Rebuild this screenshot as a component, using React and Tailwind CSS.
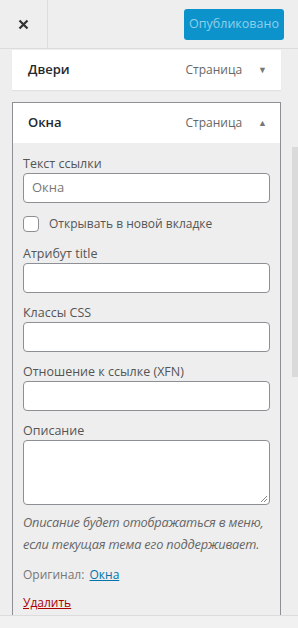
import React from 'react';

const Field = ({ label, value, tall }) => (
  <div className="flex flex-col">
    <label className="text-[12.5px] leading-[18px] text-[#555]">{label}</label>
    {tall ? (
      <div className="relative h-[65px] rounded-[4px] border border-[#8c8f94] bg-white">
        <svg className="absolute bottom-[1px] right-[1px]" width="8" height="8" viewBox="0 0 8 8">
          <path d="M7 1 1 7M7 4 4 7" stroke="#888" strokeWidth="1" />
        </svg>
      </div>
    ) : (
      <div className="flex h-[30px] items-center rounded-[4px] border border-[#8c8f94] bg-white px-[8px] text-[13px] text-[#777]">
        {value}
      </div>
    )}
  </div>
);

export default function App() {
  return (
    <div className="relative h-[628px] w-[298px] overflow-hidden bg-[#eeeeee] font-['Open_Sans',sans-serif]">
      {/* Header */}
      <div className="flex h-[49px] items-center border-b border-[#dcdcde]">
        <div className="flex h-full w-[48px] items-center justify-center border-r border-[#dcdcde]">
          <svg width="11" height="11" viewBox="0 0 11 11">
            <path d="M1.5 1.5 9.5 9.5M9.5 1.5 1.5 9.5" stroke="#333" strokeWidth="2.2" />
          </svg>
        </div>
        <div className="flex-1" />
        <div className="mr-[14px] flex h-[31px] w-[100px] items-center justify-center rounded-[3px] bg-[#0c93cb] text-[12.5px] text-[#8fd0ec]">
          Опубликовано
        </div>
      </div>

      {/* Menu items */}
      <div className="ml-[12px] mr-[17px] flex flex-col">
        <div className="mt-[1px] flex h-[40px] items-center bg-white pl-[16px] pr-[14px] shadow-[0_1px_1px_rgba(0,0,0,0.06)]">
          <span className="flex-1 text-[13px] font-semibold text-[#23282d]">Двери</span>
          <span className="text-[12px] text-[#666]">Страница</span>
          <span className="ml-[16px] text-[9px] text-[#777]">▼</span>
        </div>

        <div className="mt-[12px] border-x border-t border-[#8c8f94]">
          <div className="flex h-[40px] items-center bg-white pl-[15px] pr-[13px]">
            <span className="flex-1 text-[13px] font-semibold text-[#23282d]">Окна</span>
            <span className="text-[12px] text-[#666]">Страница</span>
            <span className="ml-[16px] text-[9px] text-[#777]">▲</span>
          </div>
          <div className="flex h-[472px] flex-col bg-[#eeeeee] px-[10px] pt-[12px]">
            <Field label="Текст ссылки" value="Окна" />
            <label className="mt-[12px] flex items-center gap-[10px]">
              <span className="h-[16px] w-[16px] rounded-[4px] border border-[#8c8f94] bg-white" />
              <span className="text-[12px] text-[#555]">Открывать в новой вкладке</span>
            </label>
            <div className="mt-[12px] flex flex-col gap-[11px]">
              <Field label="Атрибут title" />
              <Field label="Классы CSS" />
              <Field label="Отношение к ссылке (XFN)" />
              <Field label="Описание" tall />
            </div>
            <p className="mt-[6px] text-[12.8px] italic leading-[22px] tracking-[-0.2px] text-[#666]">
              Описание будет отображаться в меню, если текущая тема его поддерживает.
            </p>
            <div className="mt-[11px] text-[12px] leading-[18px] text-[#777]">
              Оригинал:{' '}
              <span className="ml-[2px] text-[#0073aa] underline">Окна</span>
            </div>
            <div className="mt-[10px] text-[12px] leading-[18px] text-[#a00] underline">Удалить</div>
          </div>
        </div>
      </div>

      <div className="h-[14px] border-t border-[#dcdcde] bg-[#f1f1f1]" />

      {/* Scrollbar */}
      <div className="absolute right-0 top-[147px] h-[230px] w-[6px] bg-[#dadada]" />
    </div>
  );
}
